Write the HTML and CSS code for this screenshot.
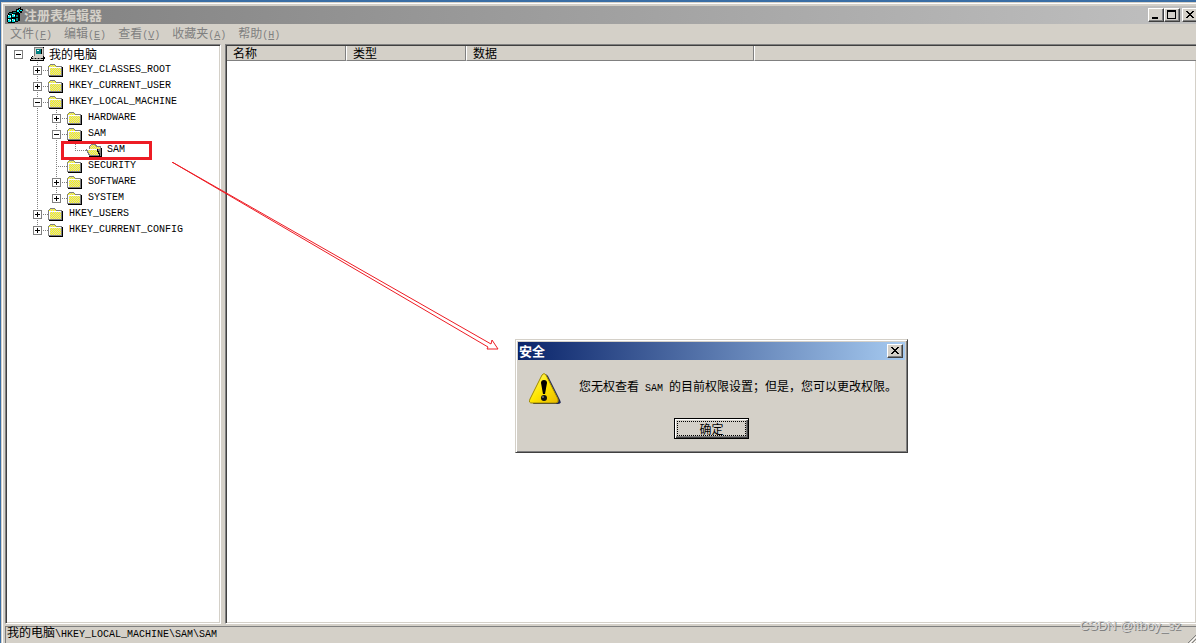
FILE: index.html
```html
<!DOCTYPE html>
<html lang="zh-CN">
<head>
  <meta charset="UTF-8" />
  <meta name="viewport" content="width=device-width, initial-scale=1" />
  <title>注册表编辑器</title>
  <link rel="stylesheet" href="styles.css">
</head>
<body>

<!-- Shared icons -->
<svg class="sprite" aria-hidden="true">
  <defs>
    <pattern id="checker" width="2" height="2" patternUnits="userSpaceOnUse">
      <rect width="2" height="2" fill="#ffff00"/>
      <rect width="1" height="1" fill="#d4d0c8"/>
      <rect x="1" y="1" width="1" height="1" fill="#d4d0c8"/>
    </pattern>
    <linearGradient id="warn" x1="0" y1="0" x2="1" y2="1">
      <stop offset="0" stop-color="#fff98a"/>
      <stop offset="0.5" stop-color="#ffe600"/>
      <stop offset="1" stop-color="#e8b800"/>
    </linearGradient>
  </defs>
  <symbol id="folder" viewBox="0 0 16 16">
    <path d="M1 14h13V5h1v10H1z" fill="#000"/>
    <path d="M0 4h1V3h1V2h5v1h1v1h6v10H0z" fill="#808080"/>
    <path d="M1 4h1V3h5v1h1v1h5v8H1z" fill="url(#checker)"/>
    <path d="M1 5h12v1H2v7H1z" fill="#fff"/>
  </symbol>
  <symbol id="folder-open" viewBox="0 0 16 16">
    <path d="M3 14h12V6h1v9H3z" fill="#000"/>
    <path d="M3 4h1V3h1V2h5v1h1v1h4v10H3v-1H2v-2H1V9H0V7h3z" fill="#808080"/>
    <path d="M4 4h1V3h4v1h1v1h4v2H4z" fill="url(#checker)"/>
    <path d="M1 7h10v1h1v2h1v3H4v-1H3v-2H2V8H1z" fill="url(#checker)"/>
    <path d="M1 7h10v1H1z" fill="#fff"/>
    <path d="M11 7h1v2h1v2h1v3h-1v-2h-1v-2h-1z" fill="#000"/>
  </symbol>
  <symbol id="computer" viewBox="0 0 16 16">
    <path d="M4 1h10v10H4z" fill="#000"/>
    <path d="M4 1h9v9H4z" fill="#d4d0c8"/>
    <path d="M4 1h9v1H5v8H4zM13 2h1v9h-1z" fill="#808080"/>
    <path d="M6 3h6v5H6z" fill="#000"/>
    <path d="M6 3h5v5H6z" fill="#008080"/>
    <path d="M7 4h2v1H7z" fill="#fff"/>
    <path d="M2 10h12v1h1v2h-1v2H0v-2h1v-2h1z" fill="#000"/>
    <path d="M3 10h10v1H3zM2 11h11v1H2zM1 13h12v1H1z" fill="#d4d0c8"/>
    <path d="M3 12h2v1H3zM6 12h2v1H6zM9 12h2v1H9z" fill="#808080"/>
  </symbol>
  <symbol id="regedit" viewBox="0 0 16 16">
    <path d="M1 6h1V5h3V4h4v1h2v3h2v6h-2v1H8v1H1v-1H0V8h1z" fill="#000"/>
    <path d="M1 8h3v3H1zM5 7h3v3H5zM1 12h3v3H1zM5 12h3v3H5z" fill="#00e0e0"/>
    <path d="M2 6h3v1H2zM6 5h3v1H6zM9 8h2v2H9zM9 11h2v3H9z" fill="#008080"/>
    <path d="M1 8h1v1H1zM3 9h1v1H3zM5 7h1v1H5zM7 8h1v1H7zM1 12h1v1H1zM3 13h1v1H3zM5 12h1v1H5zM7 13h1v1H7z" fill="#fff"/>
    <path d="M9 2h2V1h2V0h1v2h2v2h-1v2h-2v2h-2V6H9z" fill="#000"/>
    <path d="M10 3h2v2h-2zM12 2h1v1h-1zM13 3h2v1h-2zM12 5h1v1h-1z" fill="#00ffff"/>
  </symbol>
</svg>

<div class="window">
  <header class="title-bar">
    <svg class="icon" aria-hidden="true"><use href="#regedit"/></svg>
    <h1>注册表编辑器</h1>
    <div class="caption-buttons">
      <button class="caption-btn" aria-label="最小化">
        <svg viewBox="0 0 12 10"><path d="M2 7h6v2H2z"/></svg>
      </button>
      <button class="caption-btn" aria-label="最大化">
        <svg viewBox="0 0 12 10"><path d="M1 0h9v9H1zM2 2v6h7V2z" fill-rule="evenodd"/></svg>
      </button>
      <button class="caption-btn close" aria-label="关闭">
        <svg viewBox="0 0 12 10"><path d="M2 1h2v1h1v1h2V2h1V1h2v1H9v1H8v1H7v1h1v1h1v1h1v1H8V7H7V6H5v1H4v1H2V7h1V6h1V5h1V4H4V3H3V2H2z"/></svg>
      </button>
    </div>
  </header>

  <nav class="menu">
    <button>文件<span class="en">(<u>F</u>)</span></button>
    <button>编辑<span class="en">(<u>E</u>)</span></button>
    <button>查看<span class="en">(<u>V</u>)</span></button>
    <button>收藏夹<span class="en">(<u>A</u>)</span></button>
    <button>帮助<span class="en">(<u>H</u>)</span></button>
  </nav>

  <main class="panes">
    <div class="tree-pane">
      <ul class="tree">
        <li>
          <div class="row root"><button class="toggle open" aria-label="折叠"></button><svg class="icon" aria-hidden="true"><use href="#computer"/></svg><span>我的电脑</span></div>
          <ul>
            <li><div class="row"><button class="toggle" aria-label="展开"></button><svg class="icon" aria-hidden="true"><use href="#folder"/></svg><span class="en">HKEY_CLASSES_ROOT</span></div></li>
            <li><div class="row"><button class="toggle" aria-label="展开"></button><svg class="icon" aria-hidden="true"><use href="#folder"/></svg><span class="en">HKEY_CURRENT_USER</span></div></li>
            <li>
              <div class="row"><button class="toggle open" aria-label="折叠"></button><svg class="icon" aria-hidden="true"><use href="#folder"/></svg><span class="en">HKEY_LOCAL_MACHINE</span></div>
              <ul>
                <li><div class="row"><button class="toggle" aria-label="展开"></button><svg class="icon" aria-hidden="true"><use href="#folder"/></svg><span class="en">HARDWARE</span></div></li>
                <li>
                  <div class="row"><button class="toggle open" aria-label="折叠"></button><svg class="icon" aria-hidden="true"><use href="#folder"/></svg><span class="en">SAM</span></div>
                  <ul>
                    <li><div class="row leaf marked"><svg class="icon" aria-hidden="true"><use href="#folder-open"/></svg><span class="en">SAM</span></div></li>
                  </ul>
                </li>
                <li><div class="row leaf"><svg class="icon" aria-hidden="true"><use href="#folder"/></svg><span class="en">SECURITY</span></div></li>
                <li><div class="row"><button class="toggle" aria-label="展开"></button><svg class="icon" aria-hidden="true"><use href="#folder"/></svg><span class="en">SOFTWARE</span></div></li>
                <li><div class="row"><button class="toggle" aria-label="展开"></button><svg class="icon" aria-hidden="true"><use href="#folder"/></svg><span class="en">SYSTEM</span></div></li>
              </ul>
            </li>
            <li><div class="row"><button class="toggle" aria-label="展开"></button><svg class="icon" aria-hidden="true"><use href="#folder"/></svg><span class="en">HKEY_USERS</span></div></li>
            <li><div class="row"><button class="toggle" aria-label="展开"></button><svg class="icon" aria-hidden="true"><use href="#folder"/></svg><span class="en">HKEY_CURRENT_CONFIG</span></div></li>
          </ul>
        </li>
      </ul>
    </div>

    <div class="list-pane">
      <table class="values">
        <thead>
          <tr>
            <th class="col-name">名称</th>
            <th class="col-type">类型</th>
            <th class="col-data">数据</th>
            <td></td>
          </tr>
        </thead>
      </table>
    </div>
  </main>

  <footer class="status">
    <span>我的电脑<span class="en">\HKEY_LOCAL_MACHINE\SAM\SAM</span></span>
    <svg class="grip" viewBox="0 0 8 8" aria-hidden="true"><path d="M0 8L8 0M4 8l4-4" stroke="#808080"/><path d="M1 9L9 1M5 9l4-4" stroke="#fff"/></svg>
  </footer>
</div>

<!-- Red arrow from the SAM key to the message -->
<svg class="arrow" viewBox="0 0 328 190" aria-hidden="true">
  <path d="M0 0L316 185M0 0L319 182M316 185L315 187L326 187L320 178L319 182"/>
</svg>

<section class="dialog" role="dialog" aria-labelledby="dialogTitle">
  <div class="dialog-title">
    <h2 id="dialogTitle">安全</h2>
    <button class="caption-btn" aria-label="关闭">
      <svg viewBox="0 0 12 10"><path d="M2 1h2v1h1v1h2V2h1V1h2v1H9v1H8v1H7v1h1v1h1v1h1v1H8V7H7V6H5v1H4v1H2V7h1V6h1V5h1V4H4V3H3V2H2z"/></svg>
    </button>
  </div>
  <div class="message">
    <svg class="warning" viewBox="0 0 32 32" aria-hidden="true">
      <path d="M15 2q2-2 4 1l12 24q2 4-2 4H4z" fill="#1c2458"/>
      <path d="M13 2q2-3 4 0l12 24q1 4-2 4H3q-4 0-2-4z" fill="url(#warn)" stroke="#a08a00"/>
      <path d="M12 10q0-3 3-3t3 3l-2 11h-2z" fill="#000"/>
      <circle cx="15" cy="25" r="3" fill="#111"/>
      <circle cx="14" cy="24" r="1" fill="#777"/>
    </svg>
    <p>您无权查看<span class="en"> SAM </span>的目前权限设置；但是，您可以更改权限。</p>
  </div>
  <button class="ok"><span>确定</span></button>
</section>

<div class="watermark">CSDN @itboy_sz</div>

</body>
</html>
```
FILE: styles.css
```css
*,
*::after {
  box-sizing: border-box;
}
body {
  margin: 0;
  height: 100vh;
  overflow: hidden;
  position: relative;
  background: #3a6ea5;
  font-family: "Noto Sans CJK SC", sans-serif;
  font-size: 12px;
  line-height: 16px;
  color: #000;
}
button {
  font: inherit;
  color: inherit;
  padding: 0;
  margin: 0;
  border: none;
  background: none;
}
.en {
  font-family: "Liberation Mono", monospace;
  font-size: 10px;
  white-space: pre;
}
.sprite {
  position: absolute;
  width: 0;
  height: 0;
}
.icon {
  width: 16px;
  height: 16px;
  flex: none;
  shape-rendering: crispEdges;
}

/* Main window */
.window {
  height: 100vh;
  padding: 2px 0 0 2px;
  display: flex;
  flex-direction: column;
  background: #d4d0c8;
  border-top: 2px solid #3a6ea5;
  border-left: 1px solid #3a6ea5;
  box-shadow: inset 1px 1px #d4d0c8, inset 2px 2px #fff;
}
.title-bar {
  display: flex;
  align-items: center;
  height: 18px;
  margin: 2px 0 0 2px;
  padding-left: 2px;
  background: linear-gradient(to right, #808080, #c0c0c0);
}
.title-bar h1 {
  flex: 1;
  margin: 0 0 0 1px;
  font-size: 13px;
  line-height: 18px;
  color: #d4d0c8;
}
.caption-buttons {
  display: flex;
  margin-right: -2px;
}
.caption-btn {
  width: 16px;
  height: 14px;
  background: #d4d0c8;
  border: 1px solid;
  border-color: #fff #404040 #404040 #fff;
  box-shadow: inset -1px -1px #808080;
  padding: 1px;
  flex: none;
}
.caption-btn svg {
  display: block;
  width: 12px;
  height: 10px;
  shape-rendering: crispEdges;
}
.caption-btn.close {
  margin-left: 2px;
}
.menu {
  display: flex;
  gap: 12px;
  height: 20px;
  padding: 0 7px;
  color: #808080;
}

/* Tree and value list */
.panes {
  flex: 1;
  display: flex;
  gap: 4px;
  padding-left: 2px;
  min-height: 0;
}
.tree-pane,
.list-pane {
  background: #fff;
  border: 1px solid;
  border-color: #808080 #fff #fff #808080;
  box-shadow: inset 1px 1px #404040, inset -1px -1px #d4d0c8;
  padding: 1px;
}
.tree-pane {
  width: 216px;
  flex: none;
}
.list-pane {
  flex: 1;
  border-right: none;
  padding-right: 0;
}
.tree,
.tree ul {
  list-style: none;
  margin: 0;
  padding: 0;
}
.tree {
  padding-left: 7px;
}
.tree ul {
  padding-left: 19px;
}
/* dotted guide running down each branch */
.tree ul > li {
  background: repeating-linear-gradient(#808080 0 1px, transparent 1px 2px) 4px 0 / 1px 100% no-repeat;
}
.tree ul > li:last-child {
  background-size: 1px 9px;
}
.row {
  display: flex;
  align-items: center;
  height: 16px;
  background: repeating-linear-gradient(to right, #808080 0 1px, transparent 1px 2px) 4px 8px / 11px 1px no-repeat;
}
.row .en {
  line-height: 18px;
}
.row .icon {
  margin: 0 5px 0 6px;
}
.row.root {
  background: none;
}
.row.root .icon {
  margin: 0 3px 0 7px;
}
.row.leaf {
  padding-left: 9px;
}
.toggle {
  width: 9px;
  height: 9px;
  flex: none;
  border: 1px solid #808080;
  background:
    linear-gradient(#000, #000) 1px 3px / 5px 1px no-repeat,
    linear-gradient(#000, #000) 3px 1px / 1px 5px no-repeat,
    #fff;
}
.toggle.open {
  background: linear-gradient(#000, #000) 1px 3px / 5px 1px no-repeat, #fff;
}
.row.marked {
  position: relative;
}
.row.marked::after {
  content: "";
  position: absolute;
  left: -10px;
  top: -1px;
  width: 91px;
  height: 19px;
  border: 3px solid #ed1c24;
}
.values {
  width: 100%;
  border-collapse: separate;
  border-spacing: 0;
  table-layout: fixed;
  background: #d4d0c8;
}
.values th,
.values td {
  height: 15px;
  line-height: 14px;
  padding: 0 6px;
  border-bottom: 1px solid #808080;
  font-weight: normal;
  text-align: left;
}
.values th {
  border-right: 1px solid #808080;
}
.values th + th,
.values th + td {
  border-left: 1px solid #fff;
}
.col-name { width: 119px; }
.col-type { width: 120px; }
.col-data { width: 288px; }

.status {
  display: flex;
  justify-content: space-between;
  align-items: flex-end;
  height: 17px;
  margin: 2px 0 0 2px;
  padding-left: 1px;
  border-top: 1px solid #808080;
  border-left: 1px solid #808080;
}
.grip {
  width: 8px;
  height: 8px;
}

/* Message box */
.dialog {
  position: absolute;
  left: 515px;
  top: 339px;
  background: #d4d0c8;
  border: 1px solid;
  border-color: #d4d0c8 #404040 #404040 #d4d0c8;
  box-shadow: inset 1px 1px #fff, inset -1px -1px #808080;
  padding: 2px 2px 13px;
}
.dialog-title {
  display: flex;
  align-items: center;
  justify-content: space-between;
  height: 18px;
  padding: 0 2px 0 1px;
  background: linear-gradient(to right, #0a246a, #a6caf0);
}
.dialog-title h2 {
  margin: 0;
  font-size: 13px;
  line-height: 18px;
  color: #fff;
}
.message {
  display: flex;
  gap: 18px;
  padding: 13px 8px 13px 11px;
}
.message p {
  margin: 5px 0 0;
  white-space: nowrap;
}
.warning {
  width: 32px;
  height: 32px;
}
.ok {
  display: block;
  width: 75px;
  height: 21px;
  margin: 0 auto;
  padding: 2px;
  border: 1px solid #000;
  box-shadow: inset 1px 1px #fff, inset -1px -1px #404040, inset -2px -2px #808080;
}
.ok span {
  display: block;
  height: 15px;
  line-height: 13px;
  border: 1px dotted #000;
}

.arrow {
  position: absolute;
  left: 172px;
  top: 162px;
  width: 328px;
  height: 190px;
  fill: none;
  stroke: #ed1c24;
  pointer-events: none;
}
.watermark {
  position: absolute;
  right: 15px;
  bottom: 9px;
  font-family: "Liberation Sans", sans-serif;
  font-size: 13px;
  color: #d8d8d8;
  text-shadow: 1px 1px #808080;
}
```
